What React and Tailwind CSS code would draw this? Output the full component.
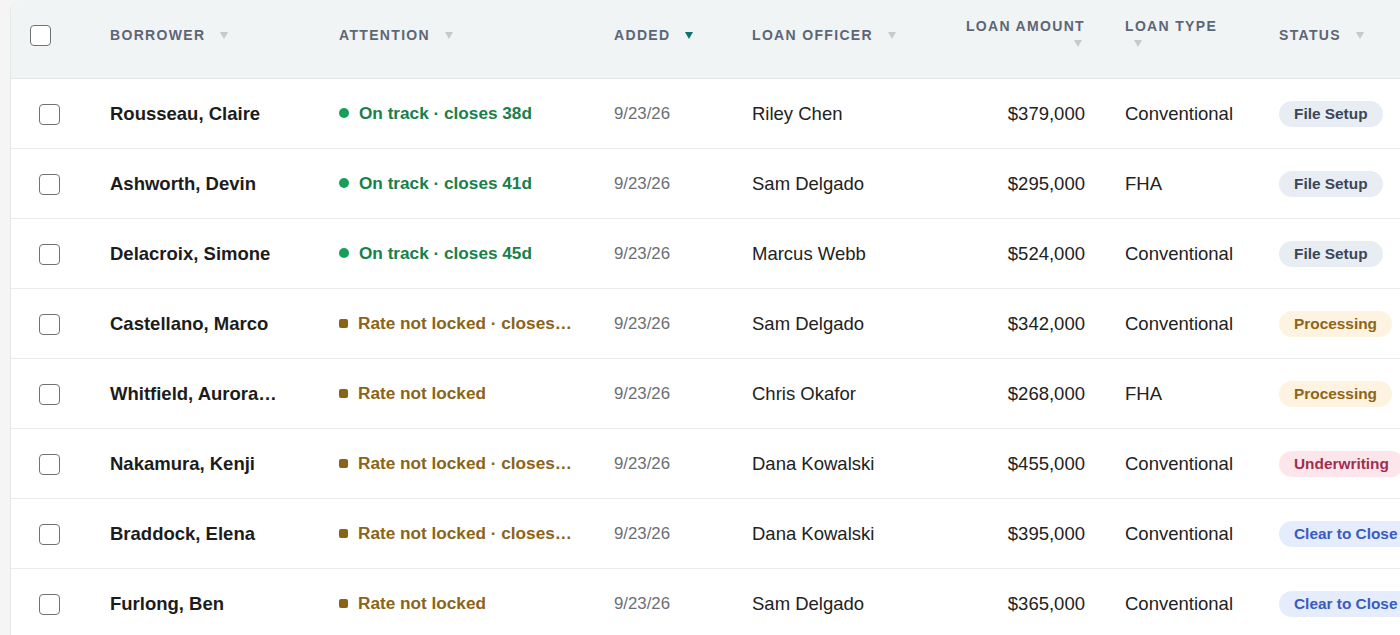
import React from "react";

const rows = [
  { name: "Rousseau, Claire", tone: "green", att: "On track · closes 38d", officer: "Riley Chen", amount: "$379,000", type: "Conventional", status: "File Setup" },
  { name: "Ashworth, Devin", tone: "green", att: "On track · closes 41d", officer: "Sam Delgado", amount: "$295,000", type: "FHA", status: "File Setup" },
  { name: "Delacroix, Simone", tone: "green", att: "On track · closes 45d", officer: "Marcus Webb", amount: "$524,000", type: "Conventional", status: "File Setup" },
  { name: "Castellano, Marco", tone: "amber", att: "Rate not locked · closes…", officer: "Sam Delgado", amount: "$342,000", type: "Conventional", status: "Processing" },
  { name: "Whitfield, Aurora…", tone: "amber", att: "Rate not locked", officer: "Chris Okafor", amount: "$268,000", type: "FHA", status: "Processing" },
  { name: "Nakamura, Kenji", tone: "amber", att: "Rate not locked · closes…", officer: "Dana Kowalski", amount: "$455,000", type: "Conventional", status: "Underwriting" },
  { name: "Braddock, Elena", tone: "amber", att: "Rate not locked · closes…", officer: "Dana Kowalski", amount: "$395,000", type: "Conventional", status: "Clear to Close" },
  { name: "Furlong, Ben", tone: "amber", att: "Rate not locked", officer: "Sam Delgado", amount: "$365,000", type: "Conventional", status: "Clear to Close" },
];

const badgeStyles = {
  "File Setup": "bg-[#e8edf3] text-[#3b4758]",
  Processing: "bg-[#fdf3e0] text-[#8f6517]",
  Underwriting: "bg-[#fce6ec] text-[#a12d4f]",
  "Clear to Close": "bg-[#e5ecfb] text-[#3a5bbf]",
};

const GRID = "grid grid-cols-[79px_229px_275px_138px_214px_159px_154px_220px]";

function Arrow({ active }) {
  return (
    <svg width="8" height="7" viewBox="0 0 8 7" className="inline-block shrink-0">
      <polygon points="0,0 8,0 4,7" fill={active ? "#0f726c" : "#c6cacd"} />
    </svg>
  );
}

function Checkbox() {
  return <div className="w-[21px] h-[21px] rounded-[4px] border-[1.5px] border-[#6f7378] bg-white" />;
}

function Head({ label, active }) {
  return (
    <div className="flex items-center px-5 pb-2 whitespace-nowrap">
      <span>{label}</span>
      <span className="ml-[15px] flex items-center">
        <Arrow active={active} />
      </span>
    </div>
  );
}

export default function App() {
  return (
    <div
      className="w-[1400px] h-[635px] overflow-hidden bg-[#f5f5f5] pl-[10px]"
      style={{ fontFamily: '"Liberation Sans", Arial, sans-serif' }}
    >
      <div className="w-[1470px] bg-white rounded-tl-[12px] border-l border-[#e6e6e6] overflow-hidden">
        <div
          className={`${GRID} h-[79px] bg-[#f0f4f5] border-b border-[#e2e7e9] text-[14px] leading-[17px] font-bold tracking-[0.095em] text-[#5d6675] uppercase`}
        >
          <div className="flex items-center pl-[19px] pb-2">
            <Checkbox />
          </div>
          <Head label="Borrower" />
          <Head label="Attention" />
          <Head label="Added" active />
          <Head label="Loan Officer" />
          <div className="flex flex-col items-end justify-center pl-2 pr-5 pb-2">
            <span className="whitespace-nowrap">Loan Amount</span>
            <span className="h-[17px] flex items-center pr-[3px]">
              <Arrow />
            </span>
          </div>
          <div className="flex flex-col items-start justify-center px-5 pb-2">
            <span className="whitespace-nowrap">Loan Type</span>
            <span className="h-[17px] flex items-center pl-[9px]">
              <Arrow />
            </span>
          </div>
          <Head label="Status" />
        </div>

        {rows.map((r, i) => (
          <div key={i} className={`${GRID} h-[70px] border-b border-[#ebebeb] items-center`}>
            <div className="flex items-center pl-[28px] pt-[1px]">
              <Checkbox />
            </div>
            <div className="px-5 text-[18.5px] font-bold text-[#1c1c1c] whitespace-nowrap">{r.name}</div>
            <div className="px-5 flex items-center gap-[10px] whitespace-nowrap">
              {r.tone === "green" ? (
                <span className="w-[10px] h-[10px] rounded-full bg-[#179e59] shrink-0" />
              ) : (
                <span className="w-[9px] h-[9px] rounded-[2px] bg-[#8b6316] shrink-0" />
              )}
              <span
                className={`text-[17.2px] font-bold ${r.tone === "green" ? "text-[#17804b]" : "text-[#8a6417]"}`}
              >
                {r.att}
              </span>
            </div>
            <div className="px-5 text-[16.8px] text-[#6b6f75]">9/23/26</div>
            <div className="px-5 text-[18.5px] text-[#222222] whitespace-nowrap">{r.officer}</div>
            <div className="px-5 text-[18.5px] text-[#222222] text-right">{r.amount}</div>
            <div className="px-5 text-[18.5px] text-[#222222]">{r.type}</div>
            <div className="px-5 flex">
              <span
                className={`inline-flex items-center h-[26px] px-[15px] rounded-full text-[15.4px] font-bold whitespace-nowrap ${badgeStyles[r.status]}`}
              >
                {r.status}
              </span>
            </div>
          </div>
        ))}
      </div>
    </div>
  );
}
